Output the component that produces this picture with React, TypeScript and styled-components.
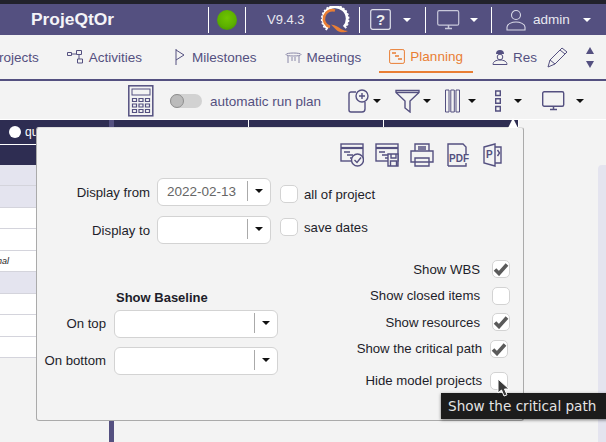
import { FC, ReactNode } from 'react';
import styled, { createGlobalStyle } from 'styled-components';

const PURPLE = '#545080';
const DARK = '#2e2d52';
const LAVENDER = '#e4e4ef';
const ORANGE = '#e97e34';

const Global = createGlobalStyle`
  html, body { margin: 0; padding: 0; }
  body {
    width: 606px;
    height: 442px;
    overflow: hidden;
    background: #f3f3f3;
    font-family: 'Liberation Sans', Arial, sans-serif;
  }
`;

const Page = styled.div`
  position: relative;
  width: 606px;
  height: 442px;
  overflow: hidden;
  display: flex;
  flex-direction: column;
`;

const TopStrip = styled.div`
  height: 4px;
  background: #22222b;
  flex: none;
`;

const Header = styled.header`
  height: 31px;
  flex: none;
  background: ${PURPLE};
  display: flex;
  align-items: center;
  color: #fff;
`;

const Brand = styled.div`
  font-size: 17.4px;
  font-weight: 700;
  color: #f4f4f8;
  margin-left: 31px;
  width: 177px;
`;

const Sep = styled.div<{ $left?: number }>`
  width: 1px;
  height: 26px;
  background: #fff;
  margin-left: ${(p) => p.$left ?? 0}px;
  flex: none;
`;

const Ball = styled.div`
  width: 20px;
  height: 20px;
  margin-left: 8px;
  border-radius: 50%;
  background: radial-gradient(circle at 50% 40%, #6fc400 0, #5cb000 55%, #3f8a00 100%);
  flex: none;
`;

const Version = styled.span`
  font-size: 13px;
  color: #e8e8f0;
  margin-left: 21px;
  width: 54px;
`;

const HeadIcon = styled.svg<{ $left: number }>`
  margin-left: ${(p) => p.$left}px;
  flex: none;
`;

const Caret = styled.span<{ $left: number; $color?: string }>`
  flex: none;
  width: 0;
  height: 0;
  margin-left: ${(p) => p.$left}px;
  border-left: 4px solid transparent;
  border-right: 4px solid transparent;
  border-top: 4px solid ${(p) => p.$color ?? '#fff'};
`;

const Admin = styled.span`
  font-size: 13.5px;
  color: #e8e8f0;
  margin-left: 7px;
`;

const NavWrap = styled.div`
  position: relative;
  flex: none;
  height: 44px;
  background: #f3f3f3;
  border-bottom: 2px solid ${PURPLE};
  overflow: hidden;
`;

const Nav = styled.nav`
  height: 44px;
  display: flex;
  align-items: center;
  gap: 28px;
  margin-left: -10px;
  font-size: 13.5px;
`;

const NavItem = styled.div<{ $gap?: number }>`
  display: flex;
  align-items: center;
  gap: ${(p) => p.$gap ?? 6}px;
  flex: none;
  white-space: nowrap;
  color: ${PURPLE};
`;

const ActiveItem = styled(NavItem)`
  align-self: flex-start;
  box-sizing: border-box;
  height: 38px;
  margin: 0 -10px;
  padding: 6px 10px 0;
  color: ${ORANGE};
  border-bottom: 2px solid ${ORANGE};
`;

const NavTools = styled.div`
  position: absolute;
  top: 0;
  right: 0;
  height: 44px;
  width: 63px;
  background: #f3f3f3;
  display: flex;
  align-items: center;
  padding-left: 4px;
  box-sizing: border-box;
`;

const Sorter = styled.div`
  margin-left: 17px;
  display: flex;
  flex-direction: column;
  gap: 7px;
`;

const SortUp = styled.span`
  width: 0;
  height: 0;
  border-left: 4px solid transparent;
  border-right: 4px solid transparent;
  border-bottom: 7px solid ${PURPLE};
`;

const SortDown = styled(SortUp)`
  border-bottom: 0;
  border-top: 7px solid ${PURPLE};
`;

const Toolbar = styled.div`
  height: 39px;
  box-sizing: border-box;
  flex: none;
  background: #f3f3f3;
  border-bottom: 1px solid #fff;
  display: flex;
  align-items: center;
  padding: 2px 0 0 128px;
`;

const Toggle = styled.div`
  width: 32px;
  height: 14px;
  margin-left: 16px;
  border-radius: 7px;
  background: #d2d2d2;
  flex: none;
  display: flex;
  align-items: center;
`;

const Knob = styled.div`
  width: 14px;
  height: 14px;
  border-radius: 50%;
  background: #bbb;
  border: 1px solid #8e8e8e;
  box-sizing: border-box;
`;

const AutoLabel = styled.span`
  font-size: 13.5px;
  color: ${PURPLE};
  margin-left: 8px;
  width: 127px;
  white-space: nowrap;
`;

const ToolIcon = styled.svg<{ $left?: number }>`
  flex: none;
  margin-left: ${(p) => p.$left ?? 0}px;
`;

const Body = styled.div`
  flex: 1;
  display: flex;
  min-height: 0;
`;

const LeftPane = styled.div`
  width: 109px;
  flex: none;
  display: flex;
  flex-direction: column;
`;

const RadioRow = styled.div`
  height: 24px;
  background: ${DARK};
  border-bottom: 1px solid #fff;
  display: flex;
  align-items: center;
  padding-left: 9px;
  gap: 4px;
  font-size: 12px;
  color: #fff;
  flex: none;
`;

const Radio = styled.span`
  width: 12px;
  height: 12px;
  border-radius: 50%;
  background: #fff;
`;

const HeadRow = styled.div`
  height: 20px;
  background: ${DARK};
  flex: none;
`;

const Row = styled.div<{ $tone?: 'lav' | 'white' }>`
  height: 21.44px;
  box-sizing: border-box;
  flex: none;
  background: ${(p) => (p.$tone === 'lav' ? LAVENDER : '#fff')};
  border-bottom: 1px solid #d4d4dc;
  display: flex;
  align-items: center;
  overflow: hidden;
`;

const RowText = styled.span`
  font-size: 9px;
  font-style: italic;
  color: #222;
  margin-left: -3px;
`;

const Splitter = styled.div`
  width: 5px;
  background: ${PURPLE};
  flex: none;
`;

const RightPane = styled.div`
  flex: 1;
  display: flex;
  flex-direction: column;
`;

const GanttHead = styled.div`
  height: 26px;
  width: 405px;
  background: ${DARK};
  display: flex;
  flex: none;
`;

const Week = styled.div`
  width: 134px;
  flex: none;
  border-right: 1px solid #fff;
  color: #fff;
  font-size: 10px;
  text-align: center;
  padding-top: 6px;
  white-space: nowrap;
  overflow: hidden;
`;

const ScrollZone = styled.div`
  flex: 1;
  display: flex;
  justify-content: flex-end;
  padding-top: 19px;
`;

const ScrollTrack = styled.div`
  width: 8px;
  background: ${LAVENDER};
  border-radius: 4px 0 0 0;
`;

const Popover = styled.div`
  position: absolute;
  left: 36px;
  top: 127px;
  width: 488px;
  height: 294px;
  box-sizing: border-box;
  background: #f3f3f3;
  border: 1px solid #aaa;
  border-top-color: #ddd;
  border-radius: 3px;
  display: flex;
  flex-direction: column;
  padding-top: 15px;
`;

const Arrow = styled.div`
  position: absolute;
  right: 5px;
  top: -10px;
  width: 0;
  height: 0;
  border-left: 5px solid transparent;
  border-right: 5px solid transparent;
  border-bottom: 10px solid #fff;
`;

const ExportRow = styled.div`
  display: flex;
  justify-content: flex-end;
  gap: 11px;
  padding-right: 21px;
  height: 24px;
`;

const DateRows = styled.div`
  display: flex;
  flex-direction: column;
  gap: 10px;
  margin-top: 11px;
`;

const FormRow = styled.div`
  display: flex;
  align-items: center;
  height: 28px;
`;

const FieldLabel = styled.label<{ $width: number; $lift?: boolean }>`
  width: ${(p) => p.$width}px;
  text-align: right;
  font-size: 13.2px;
  color: #1d1d2a;
  flex: none;
  white-space: nowrap;
  padding-bottom: ${(p) => (p.$lift ? 2 : 0)}px;
`;

const Combo = styled.div<{ $width: number; $left: number }>`
  width: ${(p) => p.$width}px;
  height: 28px;
  margin-left: ${(p) => p.$left}px;
  box-sizing: border-box;
  background: #fff;
  border: 1px solid #d3d3d3;
  border-radius: 6px;
  display: flex;
  align-items: center;
  flex: none;
`;

const ComboValue = styled.span`
  flex: 1;
  font-size: 13.5px;
  color: #666;
  padding-left: 9px;
  margin-top: -2px;
`;

const ComboButton = styled.span`
  width: 22px;
  height: 20px;
  border-left: 1px solid #aaa;
  margin-bottom: 2px;
  display: flex;
  align-items: center;
  justify-content: center;
`;

const CheckGroup = styled.div<{ $drop: number }>`
  display: flex;
  align-items: center;
  margin-left: 9px;
  margin-top: ${(p) => Math.max(p.$drop, 0)}px;
  margin-bottom: ${(p) => Math.max(-p.$drop, 0)}px;
`;

const Check = styled.span`
  width: 18px;
  height: 18px;
  box-sizing: border-box;
  background: #fff;
  border: 1px solid #d3d3d3;
  border-radius: 5px;
  flex: none;
  display: flex;
  align-items: center;
  justify-content: center;
`;

const CheckLabel = styled.span`
  font-size: 13.2px;
  color: #1d1d2a;
  margin-left: 6px;
`;

const Lower = styled.div`
  display: flex;
  margin-top: 12px;
`;

const BaselineCol = styled.div`
  width: 241px;
  flex: none;
  padding-top: 35px;
`;

const BaselineTitle = styled.div`
  font-size: 13px;
  font-weight: 700;
  color: #1d1d2a;
  margin-left: 79px;
  height: 19px;
  line-height: 14px;
`;

const BaselineRows = styled.div`
  display: flex;
  flex-direction: column;
  gap: 9px;
`;

const OptionsCol = styled.div`
  width: 232px;
  flex: none;
  display: flex;
  flex-direction: column;
`;

const Option = styled.div<{ $tall?: boolean; $nudge?: boolean }>`
  display: flex;
  align-items: center;
  justify-content: flex-end;
  height: ${(p) => (p.$tall ? 37.5 : 26.5)}px;
  font-size: 13.2px;
  color: #1d1d2a;
  gap: ${(p) => (p.$nudge ? 8 : 12)}px;
  padding-right: ${(p) => (p.$nudge ? 2 : 0)}px;
  white-space: nowrap;
`;

const Tooltip = styled.div`
  position: absolute;
  left: 441px;
  top: 393px;
  width: 170px;
  height: 26px;
  background: #1c1c1c;
  color: #e4e4e4;
  font-family: 'DejaVu Sans', sans-serif;
  font-size: 13.6px;
  line-height: 26px;
  padding-left: 7px;
  box-sizing: border-box;
  white-space: nowrap;
  box-shadow: 0 1px 3px rgba(0, 0, 0, 0.5);
`;

const Cursor = styled.svg`
  position: absolute;
  left: 497px;
  top: 378px;
`;

const Tick: FC = () => (
  <svg width="16" height="14" viewBox="0 0 16 14">
    <path d="M2 7.500l4 4L14 2.500" fill="none" stroke="#5a5a5a" strokeWidth="3.600" />
  </svg>
);

const ComboCaret: FC = () => <Caret $left={0} $color="#111" />;

const Stroke = { fill: 'none', stroke: PURPLE, strokeWidth: 1.4 };

const GanttBars: FC = () => (
  <>
    <rect x="1" y="1" width="22" height="17" {...Stroke} />
    <path d="M1 5h22" {...Stroke} strokeWidth={2.2} />
    <path d="M4 9h6M7 12h6M10 15h5" {...Stroke} strokeWidth={1.6} />
  </>
);

const ExportIcon: FC<{ children: ReactNode; w?: number }> = ({ children, w = 24 }) => (
  <svg width={w} height="24" viewBox={`0 0 ${w} 24`}>
    {children}
  </svg>
);

const DropCombo: FC<{ width: number; left: number; value?: string }> = ({ width, left, value }) => (
  <Combo $width={width} $left={left}>
    <ComboValue>{value}</ComboValue>
    <ComboButton>
      <ComboCaret />
    </ComboButton>
  </Combo>
);

const App: FC = () => (
  <>
    <Global />
    <Page>
      <TopStrip />
      <Header>
        <Brand>ProjeQtOr</Brand>
        <Sep />
        <Ball />
        <Sep $left={8} />
        <Version>V9.4.3</Version>
        <HeadIcon $left={-1} width="30" height="28" viewBox="0 0 30 28">
          <path d="M8 22.500A12 12 0 1 1 24 21" fill="none" stroke="#fff" strokeWidth="2.800" />
          <path d="M7 24A13.600 13.600 0 1 1 25 22.500" fill="none" stroke="#fff" strokeWidth="1.400" strokeDasharray="2 1.500" />
          <path d="M10 21A8.500 8.500 0 0 1 15 4.500" fill="none" stroke={ORANGE} strokeWidth="2.600" />
          <path d="M11 18.500c5 .5 8 3 10 4.500 2 1.300 5 1.800 7 2-3 1.500-8 2-11-.5-2-1.700-4-4-6-6z" fill={ORANGE} />
        </HeadIcon>
        <Sep $left={9} />
        <HeadIcon $left={10} width="21" height="21" viewBox="0 0 21 21">
          <rect x=".7" y=".7" width="19.600" height="19.600" rx="2" fill="none" stroke="#dfe0ea" strokeWidth="1.200" />
          <text x="10.500" y="16" textAnchor="middle" fontSize="15" fontWeight="700" fill="#eee" fontFamily="Liberation Sans">?</text>
        </HeadIcon>
        <Caret $left={12} />
        <Sep $left={14} />
        <HeadIcon $left={11} width="23" height="20" viewBox="0 0 23 20">
          <rect x=".7" y=".7" width="21" height="14.500" rx="1.500" fill="none" stroke="#c8c8da" strokeWidth="1.200" />
          <path d="M8 18.500h7M11.500 15v3" stroke="#c8c8da" strokeWidth="1.500" />
        </HeadIcon>
        <Caret $left={10} />
        <Sep $left={13} />
        <HeadIcon $left={14} width="20" height="22" viewBox="0 0 20 22">
          <circle cx="10" cy="6" r="4.500" fill="none" stroke="#d8d8e6" strokeWidth="1.100" />
          <path d="M1 21v-3c0-3 5-5 9-5s9 2 9 5v3z" fill="none" stroke="#d8d8e6" strokeWidth="1.100" />
        </HeadIcon>
        <Admin>admin</Admin>
        <Caret $left={13} />
      </Header>
      <NavWrap>
        <Nav>
          <NavItem>Projects</NavItem>
          <NavItem>
            <svg width="16" height="14" viewBox="0 0 16 14">
              <path d="M.5 2.500h4v3h-4zM9.500.5h5v4h-5zM10.500 9h5v4h-5zM4.500 4h5M12 4.500V9" {...Stroke} strokeWidth={1} />
            </svg>
            Activities
          </NavItem>
          <NavItem>
            <svg width="16" height="16" viewBox="0 0 16 16">
              <path d="M6 0v16M6 1l8 5-8 5" {...Stroke} strokeWidth={1} />
            </svg>
            Milestones
          </NavItem>
          <NavItem $gap={5}>
            <svg width="17" height="12" viewBox="0 0 17 12">
              <path d="M1 3.500C1 1.500 16 1.500 16 3.500S1 5.500 1 3.500zM3 5v7M14 5v7M7 6v4M10 6v4" {...Stroke} strokeWidth={1} stroke="#8a88a8" />
            </svg>
            Meetings
          </NavItem>
          <ActiveItem $gap={5}>
            <svg width="16" height="15" viewBox="0 0 16 15">
              <rect x=".6" y=".6" width="14.800" height="13.800" rx="1.500" fill="none" stroke={ORANGE} strokeWidth="1" />
              <path d="M3 4h4M6 7h4M9 10h4" stroke={ORANGE} strokeWidth="1.500" />
            </svg>
            Planning
          </ActiveItem>
          <NavItem $gap={4}>
            <svg width="18" height="16" viewBox="0 0 18 16">
              <path d="M5 5a4 4 0 0 1 8 0z" fill={PURPLE} />
              <circle cx="9" cy="8" r="2.800" fill="none" stroke={PURPLE} />
              <path d="M2 15.500c0-3 3-4.500 7-4.500s7 1.500 7 4.500z" fill="none" stroke={PURPLE} />
            </svg>
            Res
          </NavItem>
        </Nav>
        <NavTools>
          <svg width="22" height="22" viewBox="0 0 22 22">
            <path d="M1 21l2-7L15 2l5 4L8 18zM3 14l5 4M13 4l5 4" {...Stroke} strokeWidth={1} />
          </svg>
          <Sorter>
            <SortUp />
            <SortDown />
          </Sorter>
        </NavTools>
      </NavWrap>
      <Toolbar>
        <svg width="26" height="32" viewBox="0 0 26 32">
          <rect x=".8" y=".8" width="24" height="30" fill="none" stroke={PURPLE} strokeWidth="1.500" />
          <rect x="4" y="4" width="18" height="6" fill="none" stroke={PURPLE} />
          <path d="M4.500 13.500h4v3h-4zM11 13.500h4v3h-4zM17.500 13.500h4v3h-4zM4.500 19h4v3h-4zM11 19h4v3h-4zM17.500 19h4v3h-4zM4.500 24.500h4v3h-4zM11 24.500h4v3h-4zM17.500 24.500h4v3h-4z" fill="none" stroke={PURPLE} strokeWidth="1.200" />
        </svg>
        <Toggle>
          <Knob />
        </Toggle>
        <AutoLabel>automatic run plan</AutoLabel>
        <ToolIcon $left={11} width="25" height="24" viewBox="0 0 25 24">
          <path d="M8 3H3a2 2 0 0 0-2 2v16a2 2 0 0 0 2 2h11a3 3 0 0 0 3-3v-7" {...Stroke} />
          <circle cx="14" cy="7" r="6" {...Stroke} />
          <path d="M14 4v6M11 7h6" {...Stroke} />
        </ToolIcon>
        <Caret $left={0} $color="#111" />
        <ToolIcon $left={14} width="25" height="24" viewBox="0 0 25 24">
          <path d="M1 1.500h23v2L15 12v11l-5-4v-7L1 3.500z" {...Stroke} />
          <path d="M1 3.500h23" {...Stroke} />
        </ToolIcon>
        <Caret $left={3} $color="#111" />
        <ToolIcon $left={14} width="15" height="24" viewBox="0 0 15 24">
          <path d="M.5 1h3.500v22H.5zM5.800 1h3.500v22H5.800zM11 1h3.500v22H11z" {...Stroke} strokeWidth={1} />
        </ToolIcon>
        <Caret $left={8} $color="#111" />
        <ToolIcon $left={19} width="6" height="22" viewBox="0 0 6 22">
          <path d="M.7 1h4.600v4.500H.7zM.7 8.700h4.600v4.500H.7zM.7 16.500h4.600V21H.7z" {...Stroke} />
        </ToolIcon>
        <Caret $left={13} $color="#111" />
        <ToolIcon $left={20} width="23" height="20" viewBox="0 0 23 20">
          <rect x=".7" y=".7" width="21" height="14.500" rx="1.500" {...Stroke} />
          <path d="M8 18.500h7M11.500 15v3" {...Stroke} strokeWidth={1.500} />
        </ToolIcon>
        <Caret $left={11} $color="#111" />
      </Toolbar>
      <Body>
        <LeftPane>
          <RadioRow>
            <Radio />
            qu
          </RadioRow>
          <HeadRow />
          <Row $tone="lav" />
          <Row $tone="lav" />
          <Row />
          <Row />
          <Row>
            <RowText>nal</RowText>
          </Row>
          <Row $tone="lav" />
          <Row />
          <Row />
          <Row />
        </LeftPane>
        <Splitter />
        <RightPane>
          <GanttHead>
            <Week>2022-W07 (Feb)</Week>
            <Week>2022-W08 (Feb)</Week>
            <Week>2022-W09 (Feb)</Week>
          </GanttHead>
          <ScrollZone>
            <ScrollTrack />
          </ScrollZone>
        </RightPane>
      </Body>
      <Popover>
        <Arrow />
        <ExportRow>
          <ExportIcon>
            <GanttBars />
            <circle cx="17.500" cy="17" r="6" fill="#f3f3f3" stroke={PURPLE} strokeWidth="1.400" />
            <path d="M14.500 17l2.500 2.500 4-5" {...Stroke} />
          </ExportIcon>
          <ExportIcon>
            <GanttBars />
            <path d="M13 11h10v12H13zM16 11v4h5v-4M15.500 23v-5h6v5" fill="#f3f3f3" stroke={PURPLE} strokeWidth="1.400" />
          </ExportIcon>
          <ExportIcon>
            <path d="M5 8V1h14v7M1 8h22v11H1zM5 15h14v8H5z" {...Stroke} fill="#f3f3f3" />
            <path d="M8 4h8M8 6h8" {...Stroke} />
          </ExportIcon>
          <ExportIcon w={27}>
            <path d="M3 23V1h15l3 3v7M3 23h18v-3" {...Stroke} />
            <text x="4" y="19" fontSize="10" fontWeight="700" fill={PURPLE} fontFamily="Liberation Sans">PDF</text>
          </ExportIcon>
          <ExportIcon w={19}>
            <path d="M1 4l11-3v22L1 20zM12 4h6v16h-6" {...Stroke} />
            <text x="3" y="15" fontSize="10" fontWeight="700" fill={PURPLE} fontFamily="Liberation Sans">P</text>
            <path d="M14.500 7l2 3-2 3" {...Stroke} />
          </ExportIcon>
        </ExportRow>
        <DateRows>
          <FormRow>
            <FieldLabel $width={113}>Display from</FieldLabel>
            <DropCombo width={114} left={7} value="2022-02-13" />
            <CheckGroup $drop={4}>
              <Check />
              <CheckLabel>all of project</CheckLabel>
            </CheckGroup>
          </FormRow>
          <FormRow>
            <FieldLabel $width={113}>Display to</FieldLabel>
            <DropCombo width={114} left={7} />
            <CheckGroup $drop={-6}>
              <Check />
              <CheckLabel>save dates</CheckLabel>
            </CheckGroup>
          </FormRow>
        </DateRows>
        <Lower>
          <BaselineCol>
            <BaselineTitle>Show Baseline</BaselineTitle>
            <BaselineRows>
              <FormRow>
                <FieldLabel $width={69} $lift>On top</FieldLabel>
                <DropCombo width={164} left={8} />
              </FormRow>
              <FormRow>
                <FieldLabel $width={69} $lift>On bottom</FieldLabel>
                <DropCombo width={164} left={8} />
              </FormRow>
            </BaselineRows>
          </BaselineCol>
          <OptionsCol>
            <Option>
              Show WBS
              <Check>
                <Tick />
              </Check>
            </Option>
            <Option>
              Show closed items
              <Check />
            </Option>
            <Option>
              Show resources
              <Check>
                <Tick />
              </Check>
            </Option>
            <Option $nudge>
              Show the critical path
              <Check>
                <Tick />
              </Check>
            </Option>
            <Option $nudge $tall>
              Hide model projects
              <Check />
            </Option>
          </OptionsCol>
        </Lower>
      </Popover>
      <Tooltip>Show the critical path</Tooltip>
      <Cursor width="14" height="20" viewBox="0 0 14 20">
        <path d="M1 1v14l3.500-3 2.500 6 3-1.200-2.500-5.800H12z" fill="#3a3a3a" stroke="#fff" strokeWidth="1" />
      </Cursor>
    </Page>
  </>
);

export default App;
